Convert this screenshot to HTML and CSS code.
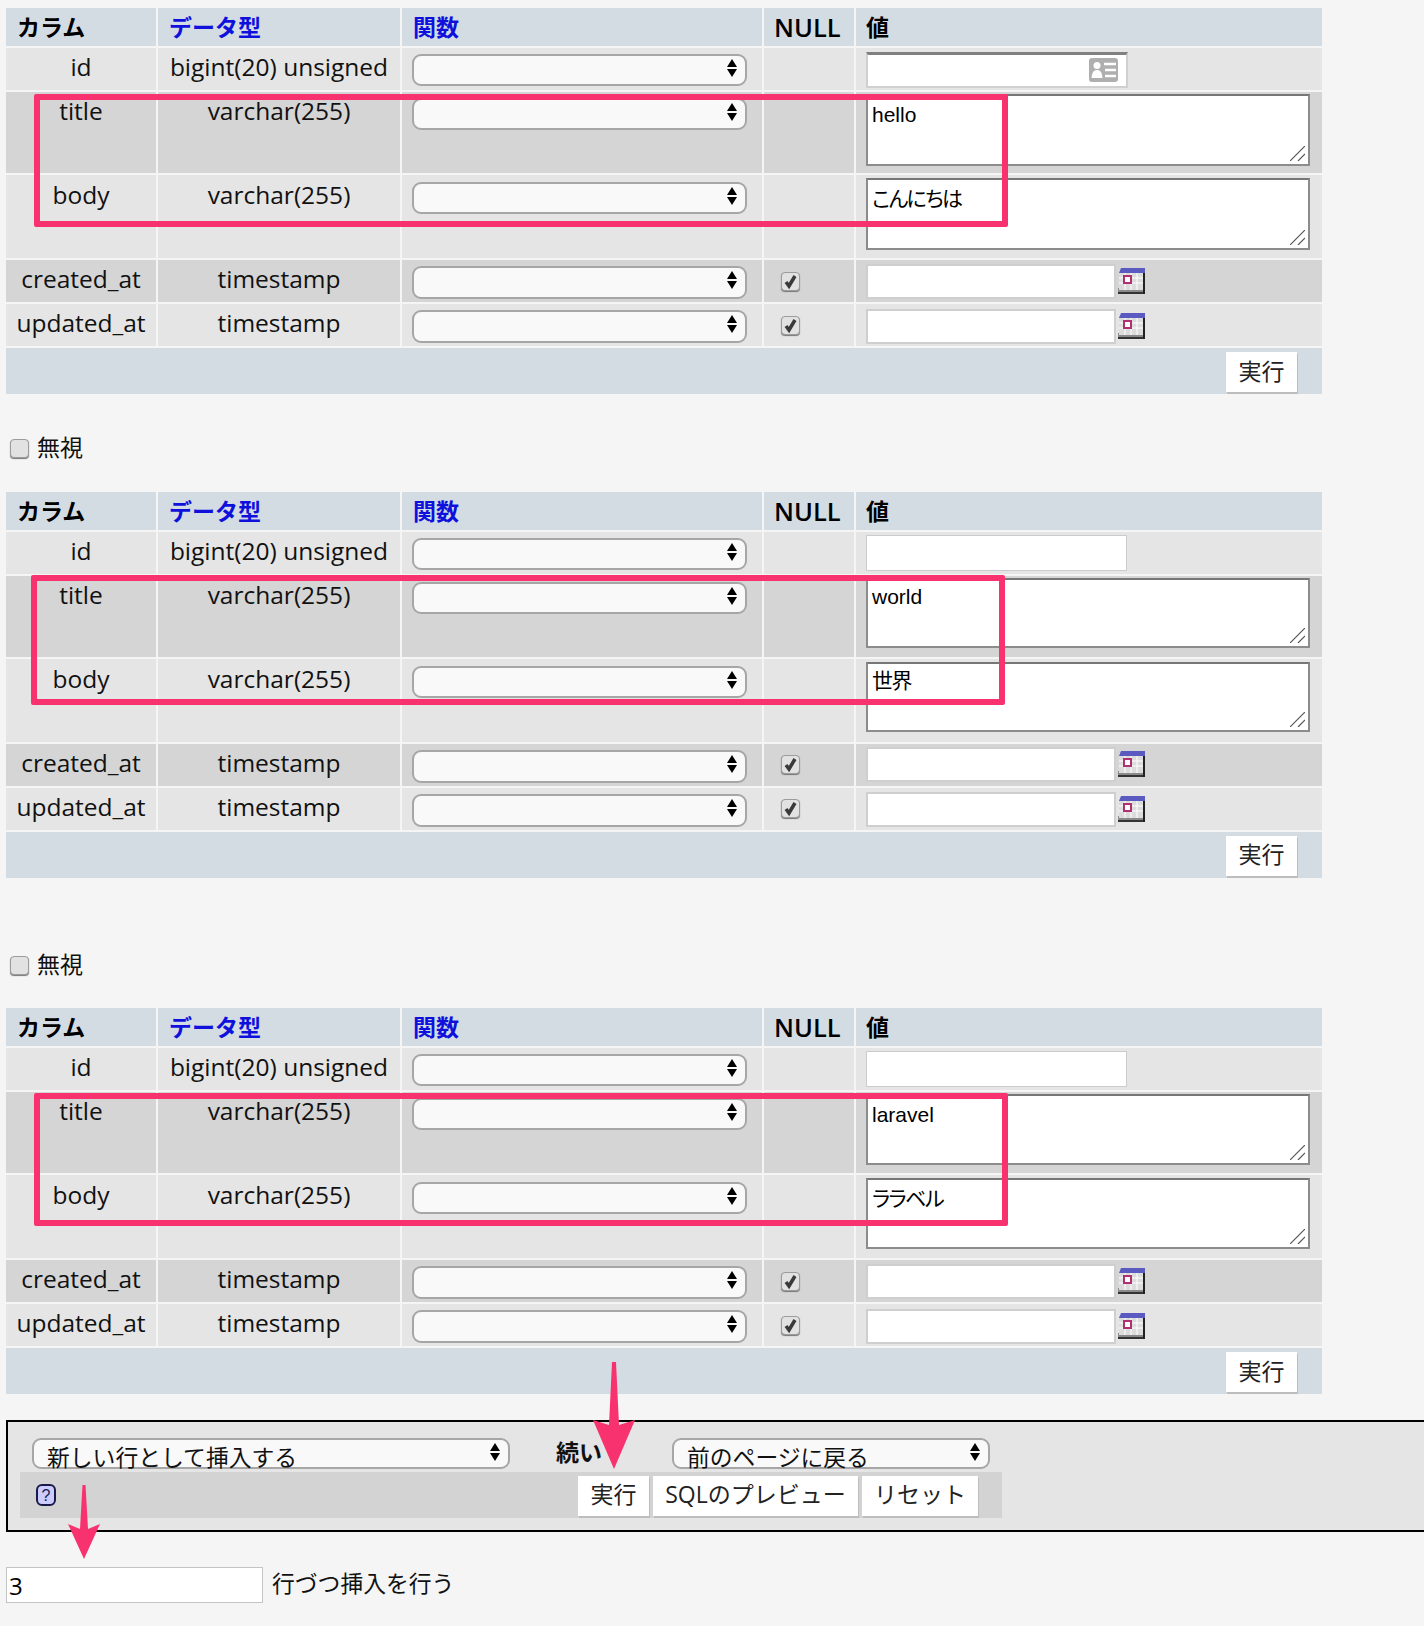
FILE: index.html
```html
<!DOCTYPE html>
<html lang="ja">
<head>
<meta charset="utf-8">
<title>phpMyAdmin 挿入</title>
<link rel="stylesheet" href="styles.css">
</head>
<body>
<svg class="defs" aria-hidden="true">
  <symbol id="updown" viewBox="0 0 10 18"><path d="M5 0 10 8H0Z M0 10H10L5 18Z" fill="#000"/></symbol>
  <symbol id="tick" viewBox="0 0 19 19"><path d="M5 10 8 14 14 4" fill="none" stroke="#3a3a3a" stroke-width="3.500"/></symbol>
  <symbol id="grip" viewBox="0 0 15 15"><path d="M0 15 15 0M8 15 15 8" fill="none" stroke="#555" stroke-width="1.200"/></symbol>
  <symbol id="cal" viewBox="0 0 27 26">
    <rect x="0" y="20" width="27" height="6" fill="#8a8a8a"/><rect x="0" y="24" width="27" height="2" fill="#333"/>
    <rect x="25" y="2" width="2" height="24" fill="#222"/>
    <rect x="1" y="2" width="24" height="20" fill="#dcdcdc"/>
    <path d="M3 0H27V5H1Z" fill="#5a5ac0"/>
    <path d="M1 10H25M1 15H25M7 5V22M13 5V22M19 5V22" stroke="#fff" stroke-width="1"/>
    <rect x="6" y="8" width="7" height="7" fill="#fff" stroke="#b03070" stroke-width="2"/>
  </symbol>
  <symbol id="card" viewBox="0 0 29 24">
    <rect width="29" height="24" rx="3" fill="#afafaf"/>
    <circle cx="8" cy="7.500" r="3.500" fill="#fff"/><path d="M2.500 20C3 14 5 12 8 12S13 14 13.500 20Z" fill="#fff"/>
    <path d="M15 6H27M16 12H27M16 18H27" stroke="#fff" stroke-width="2.500"/>
  </symbol>
</svg>

<main class="page">
  <section class="block t1">
    <table class="grid">
      <colgroup><col class="c1"><col class="c2"><col class="c3"><col class="c4"><col class="c5"></colgroup>
      <thead><tr><th>カラム</th><th class="link">データ型</th><th class="link">関数</th><th class="null">NULL</th><th class="vh">値</th></tr></thead>
      <tbody>
        <tr class="r-id"><td class="name">id</td><td class="name">bigint(20) unsigned</td><td class="fn"><span class="sel"><select></select><svg class="ud"><use href="#updown"/></svg></span></td><td></td><td class="val"><span class="idfield"><input class="idinput" type="text"><svg class="cardicon"><use href="#card"/></svg></span></td></tr>
        <tr class="r-title"><td class="name">title</td><td class="name">varchar(255)</td><td class="fn"><span class="sel"><select></select><svg class="ud"><use href="#updown"/></svg></span></td><td></td><td class="val"><span class="ta"><textarea>hello</textarea><svg class="grip"><use href="#grip"/></svg></span></td></tr>
        <tr class="r-body"><td class="name">body</td><td class="name">varchar(255)</td><td class="fn"><span class="sel"><select></select><svg class="ud"><use href="#updown"/></svg></span></td><td></td><td class="val"><span class="ta"><textarea class="jp">こんにちは</textarea><svg class="grip"><use href="#grip"/></svg></span></td></tr>
        <tr class="r-created"><td class="name">created_at</td><td class="name">timestamp</td><td class="fn"><span class="sel"><select></select><svg class="ud"><use href="#updown"/></svg></span></td><td class="nul"><span class="cb"><input type="checkbox" checked><svg><use href="#tick"/></svg></span></td><td class="val"><span class="datefield"><input class="date" type="text"><svg class="calicon"><use href="#cal"/></svg></span></td></tr>
        <tr class="r-updated"><td class="name">updated_at</td><td class="name">timestamp</td><td class="fn"><span class="sel"><select></select><svg class="ud"><use href="#updown"/></svg></span></td><td class="nul"><span class="cb"><input type="checkbox" checked><svg><use href="#tick"/></svg></span></td><td class="val"><span class="datefield"><input class="date" type="text"><svg class="calicon"><use href="#cal"/></svg></span></td></tr>
        <tr class="r-foot"><td colspan="5"><button class="btn go" type="button">実行</button></td></tr>
      </tbody>
    </table>
    <div class="mark m1"></div>
  </section>

  <label class="ignore first"><input type="checkbox"><span>無視</span></label>

  <section class="block t2">
    <table class="grid">
      <colgroup><col class="c1"><col class="c2"><col class="c3"><col class="c4"><col class="c5"></colgroup>
      <thead><tr><th>カラム</th><th class="link">データ型</th><th class="link">関数</th><th class="null">NULL</th><th class="vh">値</th></tr></thead>
      <tbody>
        <tr class="r-id"><td class="name">id</td><td class="name">bigint(20) unsigned</td><td class="fn"><span class="sel"><select></select><svg class="ud"><use href="#updown"/></svg></span></td><td></td><td class="val"><input class="plain" type="text"></td></tr>
        <tr class="r-title"><td class="name">title</td><td class="name">varchar(255)</td><td class="fn"><span class="sel"><select></select><svg class="ud"><use href="#updown"/></svg></span></td><td></td><td class="val"><span class="ta"><textarea>world</textarea><svg class="grip"><use href="#grip"/></svg></span></td></tr>
        <tr class="r-body"><td class="name">body</td><td class="name">varchar(255)</td><td class="fn"><span class="sel"><select></select><svg class="ud"><use href="#updown"/></svg></span></td><td></td><td class="val"><span class="ta"><textarea class="jp">世界</textarea><svg class="grip"><use href="#grip"/></svg></span></td></tr>
        <tr class="r-created"><td class="name">created_at</td><td class="name">timestamp</td><td class="fn"><span class="sel"><select></select><svg class="ud"><use href="#updown"/></svg></span></td><td class="nul"><span class="cb"><input type="checkbox" checked><svg><use href="#tick"/></svg></span></td><td class="val"><span class="datefield"><input class="date" type="text"><svg class="calicon"><use href="#cal"/></svg></span></td></tr>
        <tr class="r-updated"><td class="name">updated_at</td><td class="name">timestamp</td><td class="fn"><span class="sel"><select></select><svg class="ud"><use href="#updown"/></svg></span></td><td class="nul"><span class="cb"><input type="checkbox" checked><svg><use href="#tick"/></svg></span></td><td class="val"><span class="datefield"><input class="date" type="text"><svg class="calicon"><use href="#cal"/></svg></span></td></tr>
        <tr class="r-foot"><td colspan="5"><button class="btn go" type="button">実行</button></td></tr>
      </tbody>
    </table>
    <div class="mark m2"></div>
  </section>

  <label class="ignore second"><input type="checkbox"><span>無視</span></label>

  <section class="block t3">
    <table class="grid">
      <colgroup><col class="c1"><col class="c2"><col class="c3"><col class="c4"><col class="c5"></colgroup>
      <thead><tr><th>カラム</th><th class="link">データ型</th><th class="link">関数</th><th class="null">NULL</th><th class="vh">値</th></tr></thead>
      <tbody>
        <tr class="r-id"><td class="name">id</td><td class="name">bigint(20) unsigned</td><td class="fn"><span class="sel"><select></select><svg class="ud"><use href="#updown"/></svg></span></td><td></td><td class="val"><input class="plain" type="text"></td></tr>
        <tr class="r-title"><td class="name">title</td><td class="name">varchar(255)</td><td class="fn"><span class="sel"><select></select><svg class="ud"><use href="#updown"/></svg></span></td><td></td><td class="val"><span class="ta"><textarea>laravel</textarea><svg class="grip"><use href="#grip"/></svg></span></td></tr>
        <tr class="r-body"><td class="name">body</td><td class="name">varchar(255)</td><td class="fn"><span class="sel"><select></select><svg class="ud"><use href="#updown"/></svg></span></td><td></td><td class="val"><span class="ta"><textarea class="jp">ララベル</textarea><svg class="grip"><use href="#grip"/></svg></span></td></tr>
        <tr class="r-created"><td class="name">created_at</td><td class="name">timestamp</td><td class="fn"><span class="sel"><select></select><svg class="ud"><use href="#updown"/></svg></span></td><td class="nul"><span class="cb"><input type="checkbox" checked><svg><use href="#tick"/></svg></span></td><td class="val"><span class="datefield"><input class="date" type="text"><svg class="calicon"><use href="#cal"/></svg></span></td></tr>
        <tr class="r-updated"><td class="name">updated_at</td><td class="name">timestamp</td><td class="fn"><span class="sel"><select></select><svg class="ud"><use href="#updown"/></svg></span></td><td class="nul"><span class="cb"><input type="checkbox" checked><svg><use href="#tick"/></svg></span></td><td class="val"><span class="datefield"><input class="date" type="text"><svg class="calicon"><use href="#cal"/></svg></span></td></tr>
        <tr class="r-foot"><td colspan="5"><button class="btn go" type="button">実行</button></td></tr>
      </tbody>
    </table>
    <div class="mark m3"></div>
  </section>

  <section class="panel">
    <div class="panel-top">
      <span class="sel wide after-insert"><select></select><span class="seltext">新しい行として挿入する</span><svg class="ud"><use href="#updown"/></svg></span>
      <b class="then">続い</b>
      <span class="sel wide go-back"><select></select><span class="seltext">前のページに戻る</span><svg class="ud"><use href="#updown"/></svg></span>
    </div>
    <div class="panel-bar">
      <svg class="help" viewBox="0 0 20 22"><rect x="1" y="1" width="18" height="20" rx="5" fill="#ccccff" stroke="#1a1a4a" stroke-width="2"/><text x="10" y="17" text-anchor="middle" class="helpq">?</text></svg>
      <div class="actions">
        <button class="btn a1" type="button">実行</button>
        <button class="btn a2" type="button">SQLのプレビュー</button>
        <button class="btn a3" type="button">リセット</button>
      </div>
    </div>
  </section>

  <div class="rows"><input class="count" type="text" value="3"><span>行づつ挿入を行う</span></div>
</main>

<svg class="arrow arrow-a" viewBox="0 0 42 107"><path d="M19 0H23L26 63 42 58 21 107 0 58 16 63Z"/></svg>
<svg class="arrow arrow-b" viewBox="0 0 32 74"><path d="M14.500 0H17.500L20 44 32 39 16 74 0 39 12 44Z"/></svg>
</body>
</html>
```
FILE: styles.css
```css
* { box-sizing: border-box; }
html, body { margin: 0; padding: 0; }
body {
  position: relative;
  height: 1626px;
  overflow: hidden;
  background: #f5f5f5;
  color: #111;
  font-family: "Open Sans", "Noto Sans CJK JP", sans-serif;
  font-size: 24.500px;
}
.defs { position: absolute; width: 0; height: 0; }
.page { padding-top: 6px; }
.block { position: relative; margin-left: 4px; width: 1320px; }

.grid { border-collapse: separate; border-spacing: 2px; table-layout: fixed; width: 1320px; }
.c1 { width: 150px; } .c2 { width: 242px; } .c3 { width: 360px; } .c4 { width: 90px; } .c5 { width: 466px; }
.grid th {
  height: 38px; padding: 0 0 0 11px; background: #d3dce3; text-align: left;
  font-size: 23px; font-weight: 700; line-height: 38px; color: #000;
}
.grid th.link { color: #1010dd; }
.grid th.null { padding-left: 10px; font-size: 25.500px; font-weight: 600; }
.grid th.vh { padding-left: 10px; }
.grid td { padding: 0; vertical-align: top; line-height: 38px; }
.name { text-align: center; }
.r-body .name { padding-top: 1px; }
.r-id td, .r-body td, .r-updated td { background: #e5e5e5; }
.r-title td, .r-created td { background: #d5d5d5; }
.r-id { height: 42px; } .r-title { height: 81px; } .r-body { height: 83px; }
.r-created { height: 42px; } .r-updated { height: 42px; }
.r-foot { height: 46px; }
.grid .r-foot td { background: #d3dce3; text-align: right; padding-right: 25px; }

.fn { padding-left: 10px !important; }
.sel { position: relative; display: block; width: 335px; height: 32px; }
.sel select {
  appearance: none; display: block; width: 100%; height: 100%; margin: 0;
  border: 2px solid #a6a6a6; border-radius: 9px; background: #f9f9f9;
}
.seltext { position: absolute; left: 15px; top: 8px; font-size: 22.800px; line-height: 23px; color: #111; white-space: nowrap; }
.ud { position: absolute; top: 5px; right: 10px; width: 10px; height: 18px; }
.r-id .sel { margin-top: 6px; }
.r-title .sel { margin-top: 6px; }
.r-body .sel { margin-top: 7px; height: 32px; }
.r-created .sel { margin-top: 6px; height: 33px; }
.r-updated .sel { margin-top: 6px; height: 33px; }

.val { padding-left: 10px !important; }
.ta { position: relative; display: block; width: 444px; }
textarea {
  display: block; width: 444px; height: 71px; padding: 4px; margin: 0;
  border: 2px solid #8c8c8c; border-top-color: #777; background: #fff;
  font-family: "Liberation Sans", "Noto Sans CJK JP", sans-serif; font-size: 21px; line-height: 30px; color: #000;
  resize: none; border-radius: 0; outline: 0;
}
textarea.jp { font-feature-settings: "palt"; letter-spacing: -1.600px; }
.t1 textarea { height: 72px; }
.t2 textarea { height: 70px; padding-top: 2px; }
.grip { position: absolute; right: 5px; bottom: 5px; width: 15px; height: 15px; }
.r-title .ta { margin-top: 2px; }
.r-body .ta { margin-top: 3px; }

.idfield { position: relative; display: block; width: 262px; height: 36px; margin-top: 4px; }
.idinput {
  display: block; width: 100%; height: 100%; margin: 0; background: #fff;
  border: 2px solid #d0d0d0; border-top: 3px solid #808080;
}
.cardicon { position: absolute; left: 223px; top: 6px; width: 29px; height: 24px; }
.plain { display: block; width: 261px; height: 36px; margin: 3px 0 0; background: #fff; border: 1px solid #ccc; }

.datefield { display: flex; gap: 2px; align-items: flex-start; }
.r-created .datefield { margin-top: 4px; }
.r-updated .datefield { margin-top: 5px; }
.t2 .datefield { margin-top: 3px; }
.t2 .r-updated .datefield { margin-top: 4px; }
.date { display: block; width: 250px; height: 35px; margin: 0; background: #fff; border: 2px solid #cfcfcf; }
.calicon { width: 27px; height: 26px; margin-top: 4px; }

.cb { position: relative; display: block; width: 19px; height: 19px; margin: 12px 0 0 17px; line-height: 0; }
.t2 .cb { margin-top: 11px; }
.cb input, .ignore input {
  appearance: none; display: block; width: 19px; height: 19px; margin: 0;
  border: 1px solid #9c9c9c; border-radius: 4px; background: #e2e2e2;
  box-shadow: 0 1px 1px #777;
}
.cb svg { position: absolute; left: 0; top: 0; width: 19px; height: 19px; }

.btn {
  display: inline-block; height: 40px; padding: 0 0 3px; margin: 0; border: 0;
  background: #fff; box-shadow: 1px 2px 0 #bdbdbd;
  font-family: inherit; font-size: 23px; color: #222; line-height: 36px;
}
.go { width: 71px; margin-top: 4px; }
.t2 .go { padding-bottom: 6px; }

.mark {
  position: absolute; border: 6px solid #f8326f; border-radius: 2px; pointer-events: none;
}
.m1 { left: 30px; top: 88px; width: 974px; height: 133px; }
.m2 { left: 27px; top: 85px; width: 974px; height: 130px; }
.m3 { left: 30px; top: 87px; width: 974px; height: 133px; }

.ignore { display: flex; align-items: center; gap: 8px; height: 28px; padding-left: 10px; font-size: 23px; }
.ignore span { margin-top: -5px; }
.ignore.first { margin-top: 38px; margin-bottom: 28px; }
.ignore.second { margin-top: 71px; margin-bottom: 27px; }

.panel {
  margin: 24px 0 0 6px; height: 112px; background: #e5e5e5;
  border: 2px solid #000; border-right: 0; padding-top: 16px;
}
.panel-top { display: flex; align-items: flex-start; height: 31px; padding-left: 24px; }
.sel.wide { height: 31px; }
.after-insert { width: 478px; }
.go-back { width: 318px; margin-left: 69px; }
.then { margin-left: 46px; width: 47px; white-space: nowrap; font-size: 23px; line-height: 28px; }
.panel-bar { display: flex; align-items: flex-start; width: 982px; height: 46px; margin: 3px 0 0 12px; padding: 4px 0 0 16px; background: #d3d3d3; }
.help { width: 20px; height: 22px; margin-top: 8px; }
.helpq { font-family: "Liberation Sans", sans-serif; font-size: 16px; fill: #1a1a4a; }
.actions { display: flex; gap: 4px; margin-left: 522px; }
.actions .btn { padding-bottom: 5px; }
.a1 { width: 71px; } .a2 { width: 205px; } .a3 { width: 116px; }

.rows { display: flex; align-items: center; gap: 9px; margin: 35px 0 0 6px; font-size: 22.800px; }
.rows span { margin-top: -6px; }
.count { display: block; width: 257px; height: 36px; margin: 0; padding: 0 2px; background: #fff; border: 1px solid #c4c4c4; font-family: inherit; font-size: 24px; color: #000; }

.arrow { position: absolute; fill: #f8326f; }
.arrow-a { left: 593px; top: 1362px; width: 42px; height: 107px; }
.arrow-b { left: 68px; top: 1485px; width: 32px; height: 74px; }
```
